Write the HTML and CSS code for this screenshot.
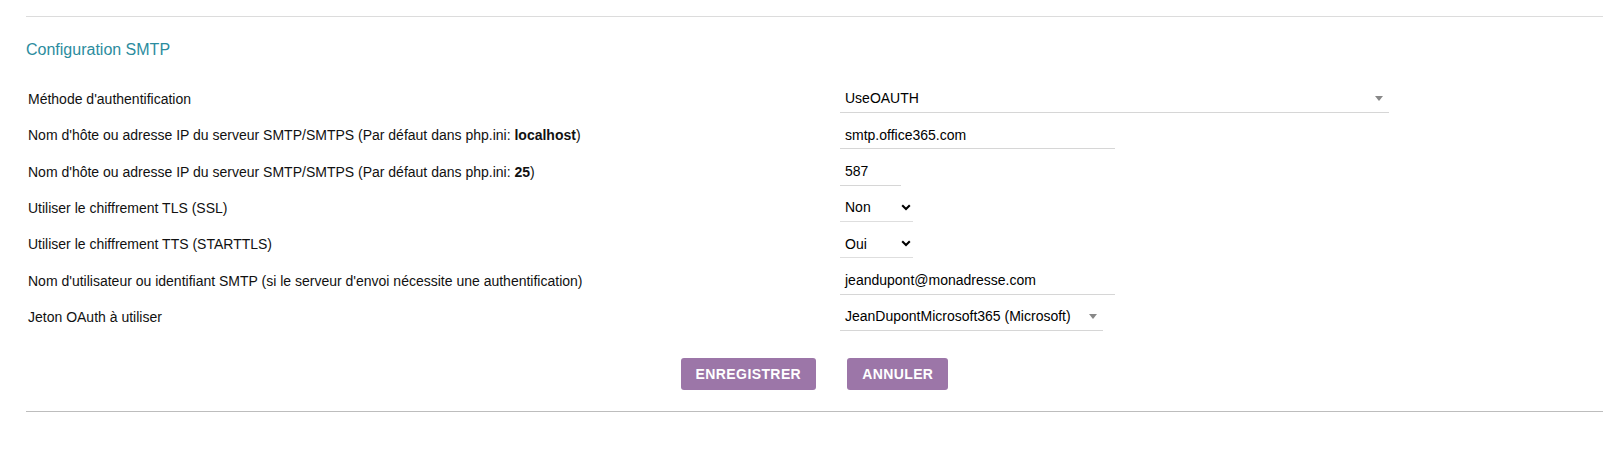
FILE: index.html
```html
<!DOCTYPE html>
<html lang="fr">
<head>
<meta charset="utf-8">
<title>Configuration SMTP</title>
<link rel="stylesheet" href="styles.css">
</head>
<body>
<div class="page">
  <div class="rule-top"></div>
  <h2 class="section-title">Configuration SMTP</h2>
  <div class="form">
    <div class="row">
      <div class="label">Méthode d'authentification</div>
      <div class="field"><div class="s2 w-auth"><span>UseOAUTH</span><i class="tri"></i></div></div>
    </div>
    <div class="row">
      <div class="label">Nom d'hôte ou adresse IP du serveur SMTP/SMTPS (Par défaut dans php.ini: <b>localhost</b>)</div>
      <div class="field"><div class="inp w-host">smtp.office365.com</div></div>
    </div>
    <div class="row">
      <div class="label">Nom d'hôte ou adresse IP du serveur SMTP/SMTPS (Par défaut dans php.ini: <b>25</b>)</div>
      <div class="field"><div class="inp w-port">587</div></div>
    </div>
    <div class="row">
      <div class="label">Utiliser le chiffrement TLS (SSL)</div>
      <div class="field"><div class="nsel"><span>Non</span><svg class="chev" width="10" height="7" viewBox="0 0 10 7"><path d="M1.2 1.3 L5 5 L8.8 1.3" fill="none" stroke="#000" stroke-width="2.1"/></svg></div></div>
    </div>
    <div class="row">
      <div class="label">Utiliser le chiffrement TTS (STARTTLS)</div>
      <div class="field"><div class="nsel"><span>Oui</span><svg class="chev" width="10" height="7" viewBox="0 0 10 7"><path d="M1.2 1.3 L5 5 L8.8 1.3" fill="none" stroke="#000" stroke-width="2.1"/></svg></div></div>
    </div>
    <div class="row">
      <div class="label">Nom d'utilisateur ou identifiant SMTP (si le serveur d'envoi nécessite une authentification)</div>
      <div class="field"><div class="inp w-host">jeandupont@monadresse.com</div></div>
    </div>
    <div class="row">
      <div class="label">Jeton OAuth à utiliser</div>
      <div class="field"><div class="s2 w-token"><span>JeanDupontMicrosoft365 (Microsoft)</span><i class="tri"></i></div></div>
    </div>
  </div>
  <div class="actions">
    <button class="btn">Enregistrer</button>
    <button class="btn">Annuler</button>
  </div>
  <div class="rule-bottom"></div>
</div>
</body>
</html>
```
FILE: styles.css
```css
html, body {
  margin: 0;
  padding: 0;
  background: #fff;
}
body {
  font-family: "Liberation Sans", Arial, sans-serif;
  font-size: 14px;
  color: #111;
}
.page {
  padding: 16px 16px 0 26px;
}
.rule-top {
  height: 0;
  border-top: 1px solid #dcdcdc;
}
.section-title {
  margin: 23.5px 0 0 0;
  font-size: 16px;
  font-weight: normal;
  line-height: 18px;
  color: #2b8c9e;
}
.form {
  margin-top: 22.3px;
}
.row {
  display: flex;
  align-items: center;
  height: 36.33px;
}
.label {
  box-sizing: border-box;
  width: 814px;
  padding-left: 2px;
  line-height: 16px;
}
.label b {
  font-weight: bold;
}
.field {
  display: flex;
  align-items: center;
}
.inp, .s2, .nsel {
  box-sizing: border-box;
  height: 28px;
  display: flex;
  align-items: center;
  padding: 0 5px;
  border-bottom: 1px solid #d6d6d6;
  line-height: 16px;
  color: #000;
}
.w-auth { width: 549px; }
.w-host { width: 275px; }
.w-port { width: 61px; }
.w-token { width: 263px; }
.s2 {
  justify-content: space-between;
  padding-right: 6px;
}
.tri {
  width: 0;
  height: 0;
  border-left: 4px solid transparent;
  border-right: 4px solid transparent;
  border-top: 5px solid #888;
  margin-top: 1px;
}
.w-token .tri {
  margin-left: 5px;
}
.nsel {
  width: 73px;
  justify-content: space-between;
  padding-right: 2px;
  border-bottom-color: #dedede;
}
.chev {
  display: block;
}
.actions {
  display: flex;
  justify-content: center;
  gap: 31px;
  margin-top: 23px;
}
.btn {
  box-sizing: border-box;
  height: 32px;
  padding: 0 15px;
  border: none;
  border-radius: 3px;
  background: #9c76a8;
  color: #fff;
  font-family: "Liberation Sans", Arial, sans-serif;
  font-size: 14px;
  font-weight: bold;
  letter-spacing: 0.4px;
  text-transform: uppercase;
  cursor: pointer;
}
.rule-bottom {
  margin-top: 21px;
  height: 0;
  border-top: 1px solid #bdbdbd;
}
```
